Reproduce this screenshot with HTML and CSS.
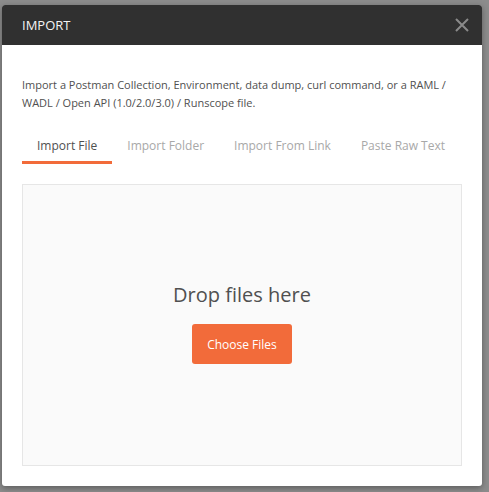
FILE: index.html
```html
<!DOCTYPE html>
<html>
<head>
<meta charset="utf-8">
<link rel="stylesheet" href="styles.css">
</head>
<body>
<div class="dialog">
  <div class="header">
    <span class="title">IMPORT</span>
    <svg class="close" width="14" height="14" viewBox="0 0 14 14"><path d="M1 1L13 13M13 1L1 13" stroke="#8a8a8a" stroke-width="2" fill="none"/></svg>
  </div>
  <div class="content">
    <p class="desc">Import a Postman Collection, Environment, data dump, curl command, or a RAML / WADL / Open API (1.0/2.0/3.0) / Runscope file.</p>
    <div class="tabs">
      <div class="tab active">Import File</div>
      <div class="tab">Import Folder</div>
      <div class="tab">Import From Link</div>
      <div class="tab">Paste Raw Text</div>
    </div>
    <div class="drop">
      <div class="drop-text">Drop files here</div>
      <button class="btn">Choose Files</button>
    </div>
  </div>
</div>
</body>
</html>
```
FILE: styles.css
```css
html, body { margin: 0; padding: 0; }
body {
  background: #8c8c8c;
  padding: 5px 0 0 2px;
  font-family: "Open Sans", "Noto Sans", sans-serif;
  height: 492px;
  box-sizing: border-box;
}
.dialog {
  width: 480px;
  height: 481px;
  background: #fff;
  border-radius: 3px;
  box-shadow: 0 2px 6px rgba(0,0,0,0.35);
  overflow: hidden;
  display: flex;
  flex-direction: column;
}
.header {
  height: 40px;
  background: #303030;
  display: flex;
  align-items: center;
  justify-content: space-between;
  padding: 0 13px 0 20px;
  flex-shrink: 0;
}
.title {
  color: #f4f4f4;
  font-size: 13px;
  font-weight: 400;
}
.close { display: block; }
.content {
  flex: 1;
  display: flex;
  flex-direction: column;
  padding: 31px 20px 20px 20px;
}
.desc {
  margin: 0;
  font-size: 11px;
  line-height: 18px;
  color: #505050;
}
.tabs {
  display: flex;
  margin-top: 24px;
}
.tab {
  font-size: 12px;
  line-height: 20px;
  padding: 0 15px 5px;
  color: #a8a8a8;
  border-bottom: 3px solid transparent;
}
.tab.active {
  color: #505050;
  border-bottom-color: #f26b3a;
}
.drop {
  flex: 1;
  margin-top: 20px;
  background: #fafafa;
  border: 1px solid #e6e6e6;
  display: flex;
  flex-direction: column;
  align-items: center;
  justify-content: center;
}
.drop-text {
  font-size: 20px;
  line-height: 28px;
  color: #505050;
  margin-bottom: 15px;
}
.btn {
  width: 100px;
  height: 40px;
  background: #f26b3a;
  border: none;
  border-radius: 3px;
  color: #fff;
  font-family: "Open Sans", "Noto Sans", sans-serif;
  font-size: 12px;
  font-weight: 400;
  margin-bottom: 5px;
}
```
